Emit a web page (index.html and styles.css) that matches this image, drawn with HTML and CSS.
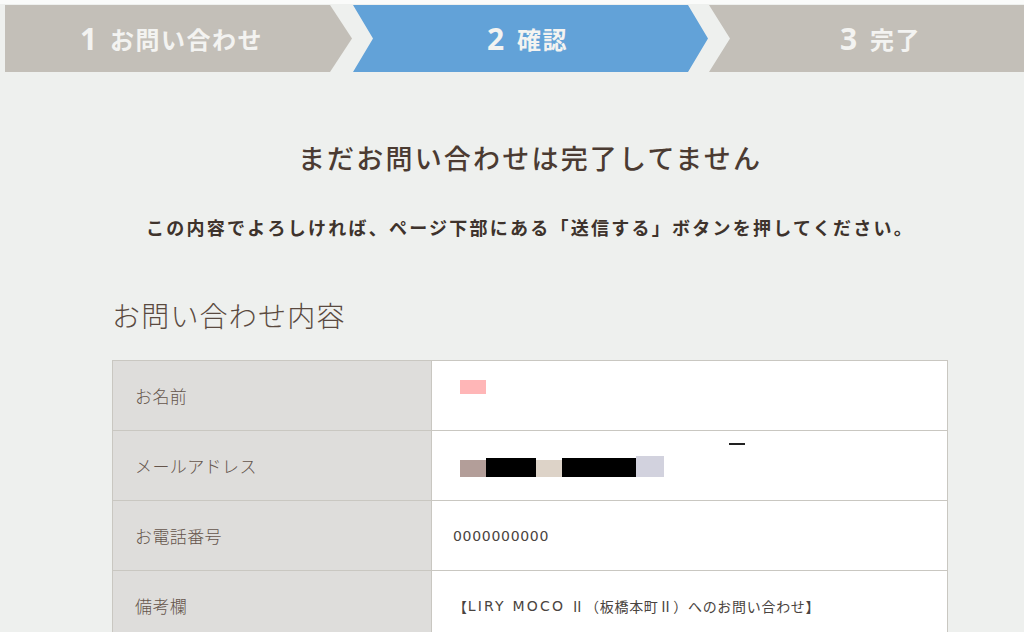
FILE: index.html
```html
<!DOCTYPE html>
<html lang="ja">
<head>
<meta charset="utf-8">
<title>確認</title>
<link rel="stylesheet" href="styles.css">
</head>
<body>
<header class="steps">
  <div class="step step-first"><span class="num">1</span><span class="label">お問い合わせ</span></div>
  <div class="step step-mid active"><span class="num">2</span><span class="label">確認</span></div>
  <div class="step step-last"><span class="num">3</span><span class="label">完了</span></div>
</header>
<main class="content">
  <h1 class="title">まだお問い合わせは完了してません</h1>
  <p class="lead">この内容でよろしければ、ページ下部にある「送信する」ボタンを押してください。</p>
  <h2 class="section">お問い合わせ内容</h2>
  <div class="table">
    <div class="th">お名前</div>
    <div class="td td-name"><span class="mask mask-pink"></span></div>
    <div class="th">メールアドレス</div>
    <div class="td td-mail">
      <span class="mask-row">
        <span class="mask m1"></span><span class="mask m2"></span><span class="mask m3"></span><span class="mask m4"></span><span class="mask m5"></span>
      </span>
      <span class="dash"></span>
    </div>
    <div class="th">お電話番号</div>
    <div class="td">0000000000</div>
    <div class="th">備考欄</div>
    <div class="td">【<span class="latin">LIRY MOCO</span>&nbsp;<span class="roman">Ⅱ</span>（板橋本町<span class="roman">Ⅱ</span>）へのお問い合わせ】</div>
  </div>
</main>
</body>
</html>
```

FILE: styles.css
```css
html, body {
  margin: 0;
  padding: 0;
}
body {
  background: #eef0ee;
  font-family: "Noto Sans CJK JP", "Noto Sans", sans-serif;
  color: #4a3d35;
  overflow: hidden;
  height: 632px;
}
.steps {
  display: flex;
  border-top: 4px solid #fafbfa;
  padding-top: 1px;
  padding-left: 5px;
  height: 67px;
}
.step {
  height: 67px;
  display: flex;
  align-items: center;
  justify-content: center;
  background: #c3bfb8;
  color: #f3f3f1;
  font-weight: bold;
  box-sizing: border-box;
}
.step-first {
  width: 347px;
  padding-right: 14px;
  clip-path: polygon(0 0, 325px 0, 347px 33.5px, 325px 67px, 0 67px);
}
.step-mid {
  width: 355px;
  margin-left: 1px;
  padding-right: 6px;
  clip-path: polygon(0 0, 335px 0, 355px 33.5px, 335px 67px, 0 67px, 20px 33.5px);
}
.step-last {
  flex: 1;
  margin-left: 1px;
  padding-left: 28px;
  clip-path: polygon(0 0, 100% 0, 100% 100%, 0 100%, 21px 33.5px);
}
.active {
  background: #62a2d8;
}
.num {
  font-family: "Open Sans", "Noto Sans", sans-serif;
  font-size: 30px;
  font-weight: bold;
  margin-right: 13px;
  line-height: 1;
}
.label {
  font-size: 24px;
  line-height: 1;
  letter-spacing: 1.5px;
}
.content {
  width: 836px;
  margin-left: 112px;
}
.title {
  margin: 66px 0 0;
  text-align: center;
  font-size: 27px;
  line-height: 40px;
  font-weight: 500;
  letter-spacing: 2.2px;
  color: #4b3b32;
}
.lead {
  margin: 35px 0 0;
  text-align: center;
  font-size: 18px;
  line-height: 28px;
  font-weight: bold;
  letter-spacing: 2.25px;
  color: #3e332c;
}
.section {
  margin: 54px 0 0;
  font-size: 28px;
  line-height: 40px;
  font-weight: 300;
  letter-spacing: 1.2px;
  color: #5a4a40;
}
.table {
  margin-top: 25px;
  display: grid;
  grid-template-columns: 319px 1fr;
  grid-auto-rows: 70px;
  border-left: 1px solid #c9c7c1;
  border-top: 1px solid #c9c7c1;
}
.th, .td {
  border-right: 1px solid #c9c7c1;
  border-bottom: 1px solid #c9c7c1;
  display: flex;
  align-items: center;
}
.th {
  background: #dedddb;
  padding-left: 22px;
  font-size: 17px;
  font-weight: 300;
  letter-spacing: 0.4px;
  color: #65554b;
}
.td {
  background: #ffffff;
  padding-left: 21px;
  font-family: "DejaVu Sans", "Noto Sans CJK JP", sans-serif;
  font-size: 14px;
  letter-spacing: 0.7px;
  color: #4a4440;
  position: relative;
}
.latin {
  letter-spacing: 2.2px;
}
.roman {
  font-family: "Noto Sans CJK JP", sans-serif;
}
.td-name {
  align-items: flex-start;
  padding-left: 28px;
  padding-top: 19px;
}
.td-mail {
  padding-left: 28px;
  padding-top: 2px;
}
.mask {
  display: block;
}
.mask-pink {
  width: 26px;
  height: 14px;
  background: #ffb6b7;
}
.mask-row {
  display: flex;
  align-items: flex-end;
}
.m1 { width: 26px; height: 17px; background: #b39e99; }
.m2 { width: 50px; height: 19px; background: #000; }
.m3 { width: 26px; height: 17px; background: #ddd3c8; }
.m4 { width: 74px; height: 19px; background: #000; }
.m5 { width: 28px; height: 21px; background: #d2d2de; }
.dash {
  position: absolute;
  left: 297px;
  top: 12px;
  width: 16px;
  height: 2px;
  background: #222;
}
```
